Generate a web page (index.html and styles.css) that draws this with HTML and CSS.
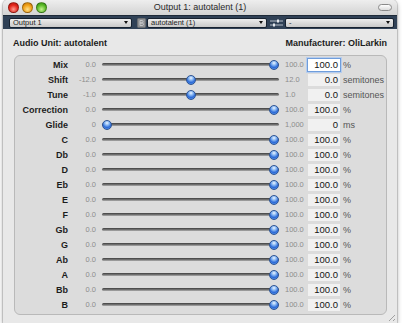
FILE: index.html
```html
<!DOCTYPE html>
<html lang="en">
<head>
    <meta charset="UTF-8">
    <title>Output 1: autotalent (1)</title>
    <link rel="stylesheet" href="styles.css">
</head>
<body>
    <div class="window">
        <div class="titlebar">
            <div class="lights">
                <span class="light red"></span>
                <span class="light yellow"></span>
                <span class="light green"></span>
            </div>
            <div class="title">Output 1: autotalent (1)</div>
            <div class="pill"></div>
        </div>
        <div class="toolbar">
            <div class="popup popup-output">Output 1</div>
            <svg class="au-icon" width="9" height="10" viewBox="0 0 9 10">
                <rect x="0.5" y="0.5" width="8" height="9" rx="1" fill="#8d8f92" stroke="#6b6e72"/>
                <path d="M3 2.5h2.2a1.3 1.3 0 0 1 0 2.5H3zM3 5h2.5a1.3 1.3 0 0 1 0 2.5H3z" fill="none" stroke="#c9cbcd" stroke-width="0.9"/>
            </svg>
            <div class="popup popup-unit">autotalent (1)</div>
            <svg class="param-icon" width="13" height="10" viewBox="0 0 13 10">
                <path d="M0 3h13M0 7h13" stroke="#b7c0c9" stroke-width="1"/>
                <rect x="7" y="1.5" width="2" height="3" fill="#e4e8ec"/>
                <rect x="3" y="5.5" width="2" height="3" fill="#e4e8ec"/>
            </svg>
            <div class="popup popup-param">-</div>
        </div>
        <div class="content">
            <div class="header">
                <span>Audio Unit: autotalent</span>
                <span>Manufacturer: OliLarkin</span>
            </div>
            <div class="params">
                <div class="row">
                    <span class="label">Mix</span><span class="min">0.0</span>
                    <div class="slider"><div class="track"></div><span class="thumb" style="left: 167px"></span></div>
                    <span class="max">100.0</span><span class="field focused">100.0</span><span class="unit">%</span>
                </div>
                <div class="row">
                    <span class="label">Shift</span><span class="min">-12.0</span>
                    <div class="slider"><div class="track"></div><span class="thumb" style="left: 83.5px"></span></div>
                    <span class="max">12.0</span><span class="field">0.0</span><span class="unit">semitones</span>
                </div>
                <div class="row">
                    <span class="label">Tune</span><span class="min">-1.0</span>
                    <div class="slider"><div class="track"></div><span class="thumb" style="left: 83.5px"></span></div>
                    <span class="max">1.0</span><span class="field">0.0</span><span class="unit">semitones</span>
                </div>
                <div class="row">
                    <span class="label">Correction</span><span class="min">0.0</span>
                    <div class="slider"><div class="track"></div><span class="thumb" style="left: 167px"></span></div>
                    <span class="max">100.0</span><span class="field">100.0</span><span class="unit">%</span>
                </div>
                <div class="row">
                    <span class="label">Glide</span><span class="min">0</span>
                    <div class="slider"><div class="track"></div><span class="thumb" style="left: 0px"></span></div>
                    <span class="max">1,000</span><span class="field">0</span><span class="unit">ms</span>
                </div>
                <div class="row">
                    <span class="label">C</span><span class="min">0.0</span>
                    <div class="slider"><div class="track"></div><span class="thumb" style="left: 167px"></span></div>
                    <span class="max">100.0</span><span class="field">100.0</span><span class="unit">%</span>
                </div>
                <div class="row">
                    <span class="label">Db</span><span class="min">0.0</span>
                    <div class="slider"><div class="track"></div><span class="thumb" style="left: 167px"></span></div>
                    <span class="max">100.0</span><span class="field">100.0</span><span class="unit">%</span>
                </div>
                <div class="row">
                    <span class="label">D</span><span class="min">0.0</span>
                    <div class="slider"><div class="track"></div><span class="thumb" style="left: 167px"></span></div>
                    <span class="max">100.0</span><span class="field">100.0</span><span class="unit">%</span>
                </div>
                <div class="row">
                    <span class="label">Eb</span><span class="min">0.0</span>
                    <div class="slider"><div class="track"></div><span class="thumb" style="left: 167px"></span></div>
                    <span class="max">100.0</span><span class="field">100.0</span><span class="unit">%</span>
                </div>
                <div class="row">
                    <span class="label">E</span><span class="min">0.0</span>
                    <div class="slider"><div class="track"></div><span class="thumb" style="left: 167px"></span></div>
                    <span class="max">100.0</span><span class="field">100.0</span><span class="unit">%</span>
                </div>
                <div class="row">
                    <span class="label">F</span><span class="min">0.0</span>
                    <div class="slider"><div class="track"></div><span class="thumb" style="left: 167px"></span></div>
                    <span class="max">100.0</span><span class="field">100.0</span><span class="unit">%</span>
                </div>
                <div class="row">
                    <span class="label">Gb</span><span class="min">0.0</span>
                    <div class="slider"><div class="track"></div><span class="thumb" style="left: 167px"></span></div>
                    <span class="max">100.0</span><span class="field">100.0</span><span class="unit">%</span>
                </div>
                <div class="row">
                    <span class="label">G</span><span class="min">0.0</span>
                    <div class="slider"><div class="track"></div><span class="thumb" style="left: 167px"></span></div>
                    <span class="max">100.0</span><span class="field">100.0</span><span class="unit">%</span>
                </div>
                <div class="row">
                    <span class="label">Ab</span><span class="min">0.0</span>
                    <div class="slider"><div class="track"></div><span class="thumb" style="left: 167px"></span></div>
                    <span class="max">100.0</span><span class="field">100.0</span><span class="unit">%</span>
                </div>
                <div class="row">
                    <span class="label">A</span><span class="min">0.0</span>
                    <div class="slider"><div class="track"></div><span class="thumb" style="left: 167px"></span></div>
                    <span class="max">100.0</span><span class="field">100.0</span><span class="unit">%</span>
                </div>
                <div class="row">
                    <span class="label">Bb</span><span class="min">0.0</span>
                    <div class="slider"><div class="track"></div><span class="thumb" style="left: 167px"></span></div>
                    <span class="max">100.0</span><span class="field">100.0</span><span class="unit">%</span>
                </div>
                <div class="row">
                    <span class="label">B</span><span class="min">0.0</span>
                    <div class="slider"><div class="track"></div><span class="thumb" style="left: 167px"></span></div>
                    <span class="max">100.0</span><span class="field">100.0</span><span class="unit">%</span>
                </div>
            </div>
        </div>
        <div class="grip"></div>
    </div>
</body>
</html>
```

FILE: styles.css
```css
body {
    margin: 0;
    background: #ffffff;
    font-family: "Liberation Sans", Arial, sans-serif;
    color: #1c1c1c;
}
.window {
    margin-left: 3px;
    width: 394px;
    height: 323px;
    background: #e8e8e8;
    border-radius: 5px 5px 0 0;
    box-shadow: 0 2px 5px rgba(0, 0, 0, 0.35), 0 0 0 1px rgba(0, 0, 0, 0.12);
    overflow: hidden;
    display: flex;
    flex-direction: column;
    position: relative;
}
.titlebar {
    height: 15px;
    background: linear-gradient(#eeeeee, #d3d3d3);
    display: grid;
    grid-template-columns: 1fr auto 1fr;
    align-items: center;
}
.lights {
    display: flex;
    gap: 3px;
    padding-left: 5px;
}
.light {
    width: 11px;
    height: 11px;
    border-radius: 50%;
    box-sizing: border-box;
    border: 1px solid rgba(0, 0, 0, 0.3);
}
.red {
    background: radial-gradient(circle at 50% 70%, #ff9b8f 0, #e3261b 55%, #b0150d 100%);
}
.yellow {
    background: radial-gradient(circle at 50% 70%, #ffe08a 0, #f0a016 55%, #c07005 100%);
}
.green {
    background: radial-gradient(circle at 50% 70%, #c4f28f 0, #5cba28 55%, #2f8a10 100%);
}
.title {
    font-size: 9px;
    color: #2a2a2a;
    line-height: 15px;
}
.pill {
    justify-self: end;
    margin-right: 5px;
    width: 14px;
    height: 7px;
    box-sizing: border-box;
    border: 1px solid #8a8a8a;
    border-radius: 4px;
    background: linear-gradient(#ffffff, #dcdcdc);
}
.toolbar {
    height: 14px;
    background: #304156;
    border-top: 1px solid #1e2a38;
    display: flex;
    align-items: center;
    padding-left: 6px;
    box-sizing: border-box;
}
.popup {
    height: 10px;
    box-sizing: border-box;
    background: linear-gradient(#ececec, #c9c9c9);
    border: 1px solid #172230;
    border-radius: 2px;
    font-size: 7.5px;
    line-height: 8px;
    padding-left: 3px;
    color: #1e1e1e;
    position: relative;
}
.popup::after {
    content: '';
    position: absolute;
    right: 3px;
    top: 2.5px;
    border-left: 2.5px solid transparent;
    border-right: 2.5px solid transparent;
    border-top: 3px solid #111;
}
.popup-output {
    width: 123px;
}
.au-icon {
    margin: 0 1px 0 5px;
}
.popup-unit {
    width: 120px;
}
.param-icon {
    margin: 0 2px 0 3px;
}
.popup-param {
    width: 109px;
}
.content {
    flex: 1;
    padding: 0 10px 0 10px;
}
.header {
    display: flex;
    justify-content: space-between;
    font-size: 9px;
    font-weight: bold;
    line-height: 11px;
    padding-top: 9px;
    margin-bottom: 6px;
}
.params {
    margin-left: 1px;
    background: #dcdcdc;
    border: 1px solid #b9b9b9;
    border-radius: 6px;
    padding: 1px 0 2px;
}
.row {
    display: grid;
    grid-template-columns: 53px 28px 183px 28px 33px 1fr;
    height: 15px;
    align-items: center;
}
.label {
    text-align: right;
    font-size: 9px;
    font-weight: bold;
}
.min {
    text-align: right;
    font-size: 7.5px;
    color: #8c8c8c;
}
.max {
    padding-left: 6px;
    font-size: 7.5px;
    color: #8c8c8c;
}
.slider {
    position: relative;
    height: 15px;
    margin-left: 6px;
    display: flex;
    align-items: center;
}
.track {
    flex: 1;
    height: 3px;
    border-radius: 2px;
    background: linear-gradient(#3e3e3e, #777777 60%, #b0b0b0);
}
.thumb {
    position: absolute;
    top: 2.5px;
    width: 8px;
    height: 8px;
    border-radius: 50%;
    border: 1px solid #2f5594;
    background: radial-gradient(circle at 50% 25%, #eef5ff 0, #8bbaf4 30%, #2d6ad6 62%, #6aa8f6 100%);
}
.field {
    margin-left: 1px;
    height: 12px;
    background: #f1f1f1;
    text-align: right;
    padding-right: 2px;
    font-size: 9.5px;
    line-height: 12px;
    color: #141414;
}
.field.focused {
    background: #ffffff;
    box-shadow: 0 0 0 1px #6f9ddb, 0 0 0 2px #b6cdee;
}
.unit {
    padding-left: 3px;
    font-size: 9px;
    color: #555555;
}
.grip {
    position: absolute;
    right: 2px;
    bottom: 2px;
    width: 9px;
    height: 9px;
    background: repeating-linear-gradient(135deg, transparent 0 2px, #a0a0a0 2px 3px);
    clip-path: polygon(100% 0, 100% 100%, 0 100%);
}
```
